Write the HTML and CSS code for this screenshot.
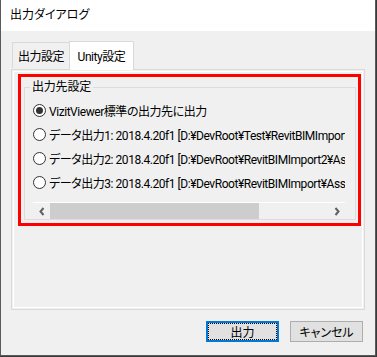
FILE: index.html
```html
<!DOCTYPE html>
<html lang="ja">
<head>
  <meta charset="UTF-8">
  <title>出力ダイアログ</title>
  <link rel="stylesheet" href="styles.css">
</head>
<body>
  <div class="window">
    <div class="titlebar">出力ダイアログ</div>
    <div class="client">
      <div class="tabs">
        <div class="tab">出力設定</div>
        <div class="tab tab-active">Unity設定</div>
      </div>
      <div class="tab-panel">
        <div class="tab-page">
          <div class="highlight">
            <fieldset class="group">
              <legend>出力先設定</legend>
              <div class="list">
                <label class="row"><span class="radio checked"></span><span>VizitViewer標準の出力先に出力</span></label>
                <label class="row"><span class="radio"></span><span>データ出力1: 2018.4.20f1 [D:¥DevRoot¥Test¥RevitBIMImport¥Assets]</span></label>
                <label class="row"><span class="radio"></span><span>データ出力2: 2018.4.20f1 [D:¥DevRoot¥RevitBIMImport2¥Assets]</span></label>
                <label class="row"><span class="radio"></span><span>データ出力3: 2018.4.20f1 [D:¥DevRoot¥RevitBIMImport¥Assets]</span></label>
              </div>
              <div class="hscroll">
                <div class="scroll-btn">
                  <svg width="8" height="9" viewBox="0 0 8 9"><path d="M5.5 1 L2.5 4.5 L5.5 8" fill="none" stroke="#606060" stroke-width="2"/></svg>
                </div>
                <div class="scroll-track"><div class="scroll-thumb"></div></div>
                <div class="scroll-btn">
                  <svg width="8" height="9" viewBox="0 0 8 9"><path d="M2.5 1 L5.5 4.5 L2.5 8" fill="none" stroke="#606060" stroke-width="2"/></svg>
                </div>
              </div>
            </fieldset>
          </div>
        </div>
      </div>
      <div class="buttons">
        <button class="btn btn-default">出力</button>
        <button class="btn">キャンセル</button>
      </div>
    </div>
  </div>
</body>
</html>
```

FILE: styles.css
```css
body {
  margin: 0;
  background-color: #3a3a3a;
  font-family: Roboto, "Noto Sans CJK JP", sans-serif;
  font-size: 12px;
  color: #000;
  font-feature-settings: "palt";
}

.window {
  width: 376px;
  height: 356px;
  box-sizing: border-box;
  border: 1px solid #5a5a5a;
  border-top: none;
  background-color: #f0f0f0;
  display: flex;
  flex-direction: column;
}

.titlebar {
  height: 31px;
  line-height: 31px;
  padding-left: 9px;
  background-color: #fff;
  flex: 0 0 auto;
}

.client {
  flex: 1;
  display: flex;
  flex-direction: column;
  letter-spacing: -0.45px;
}

/* Tabs */
.tabs {
  display: flex;
  align-items: flex-end;
  padding: 10px 0 0 11px;
  height: 28px;
}

.tab {
  box-sizing: border-box;
  width: 58px;
  height: 26px;
  margin-bottom: 1px;
  border: 1px solid #d9d9d9;
  border-bottom: none;
  background-color: #f0f0f0;
  display: flex;
  align-items: center;
  justify-content: center;
}

.tab-active {
  width: 65px;
  height: 29px;
  margin-left: -1px;
  margin-bottom: -1px;
  background-color: #fff;
  position: relative;
  z-index: 1;
  padding-bottom: 1px;
}

.tab-panel {
  height: 241px;
  box-sizing: border-box;
  margin: 0 10px;
  border: 1px solid #d9d9d9;
  padding: 1px;
  background-color: #f0f0f0;
}

.tab-page {
  height: 100%;
  box-sizing: border-box;
  border: 1px solid #fff;
  padding-top: 2px;
}

.highlight {
  margin: 0 1px 0 4px;
  border: 3px solid #ff0000;
}

/* Group box */
.group {
  margin: 3px 2px 3px 3px;
  padding: 4px 10px 0 8px;
  border: 1px solid #dcdcdc;
  min-width: 0;
}

.group legend {
  margin-left: -3px;
  padding: 0 2px;
  line-height: 14px;
  height: 14px;
  letter-spacing: -0.2px;
}

.list {
  height: 104px;
  overflow: hidden;
  white-space: nowrap;
}

.row {
  display: flex;
  align-items: center;
  height: 24px;
}

.radio {
  flex: 0 0 auto;
  width: 13px;
  height: 13px;
  box-sizing: border-box;
  border: 1px solid #333;
  border-radius: 50%;
  background-color: #fff;
  margin-right: 3px;
  display: flex;
  align-items: center;
  justify-content: center;
}

.radio.checked::after {
  content: "";
  width: 7px;
  height: 7px;
  border-radius: 50%;
  background-color: #333;
}

/* Horizontal scrollbar */
.hscroll {
  display: flex;
  height: 17px;
  box-sizing: border-box;
  border-top: 1px solid #fff;
  background-color: #f0f0f0;
}

.scroll-btn {
  width: 17px;
  display: flex;
  align-items: center;
  justify-content: center;
}

.scroll-track {
  flex: 1;
  display: flex;
}

.scroll-thumb {
  width: 209px;
  background-color: #cdcdcd;
}

/* Buttons */
.buttons {
  display: flex;
  justify-content: flex-end;
  align-items: flex-start;
  gap: 11px;
  padding: 11px 12px 0 0;
}

.btn {
  width: 73px;
  height: 21px;
  padding: 0;
  border: 1px solid #adadad;
  background-color: #e1e1e1;
  font-family: Roboto, "Noto Sans CJK JP", sans-serif;
  font-size: 12px;
  font-feature-settings: "palt";
  color: #000;
}

.btn-default {
  border: 2px solid #0078d7;
  outline: 1px dotted #000;
  outline-offset: -3px;
}
```
